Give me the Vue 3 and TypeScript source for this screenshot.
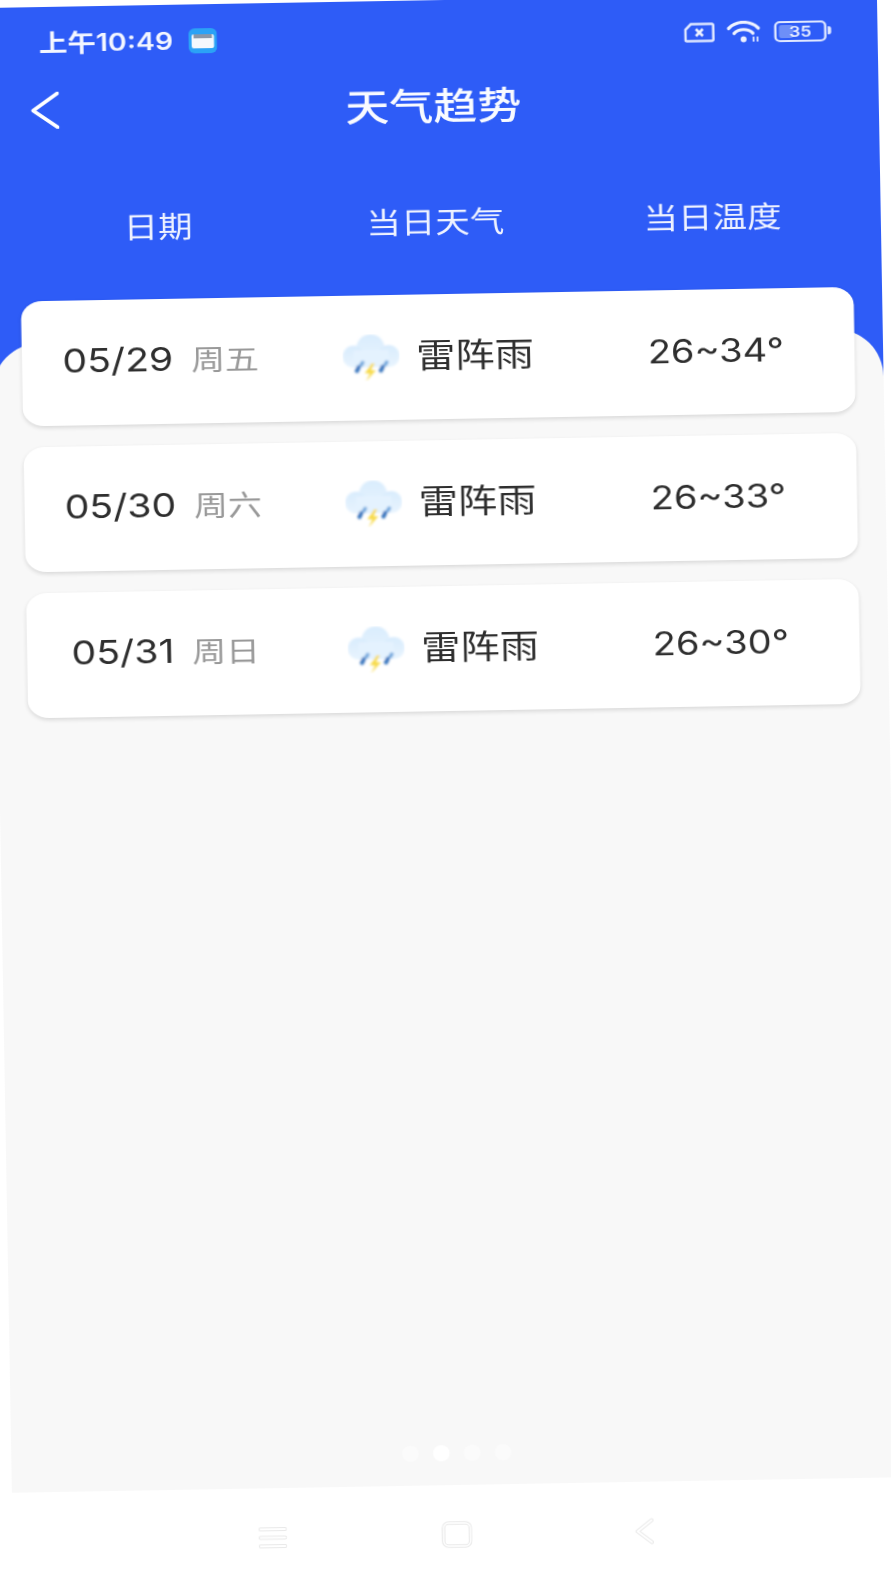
<script setup lang="ts">
interface Day {
  date: string
  week: string
  weather: string
  temp: string
}

const days: Day[] = [
  { date: '05/29', week: '周五', weather: '雷阵雨', temp: '26~34°' },
  { date: '05/30', week: '周六', weather: '雷阵雨', temp: '26~33°' },
  { date: '05/31', week: '周日', weather: '雷阵雨', temp: '26~30°' },
]
const columns: string[] = ['日期', '当日天气', '当日温度']
const dots: number[] = [0, 1, 2, 3]
</script>

<template>
  <div class="page">
    <div class="screen">
      <div class="blue">
        <header class="head">
          <div class="status">
            <div class="status-left">
              <span class="time">上午10:49</span>
              <svg class="wallet" viewBox="0 0 28 25" preserveAspectRatio="none">
                <rect x="0" y="0" width="28" height="25" rx="6" fill="#2ba2f6" />
                <rect x="3" y="6" width="22" height="14" rx="2" fill="#f4f8fd" />
                <rect x="5" y="6" width="18" height="4" fill="#8a97a8" />
              </svg>
            </div>
            <div class="status-right">
              <svg class="sim" viewBox="0 0 31 20" preserveAspectRatio="none">
                <path d="M7 1.500H28a1.500 1.500 0 0 1 1.500 1.500V17a1.500 1.500 0 0 1-1.500 1.500H3A1.500 1.500 0 0 1 1.500 17V7Z" fill="none" stroke="#dfe7ff" stroke-width="2.600" />
                <path d="M12 6.500l7 7M19 6.500l-7 7" stroke="#eef2ff" stroke-width="2.600" fill="none" />
              </svg>
              <svg class="wifi" viewBox="0 0 36 22" preserveAspectRatio="none">
                <g fill="none" stroke="#eef2ff" stroke-width="3.200" stroke-linecap="round">
                  <path d="M2 7.500C10 -0.500 24 -0.500 32 7.500" />
                  <path d="M7.500 12.500C12.500 7.500 21.500 7.500 26.500 12.500" />
                </g>
                <circle cx="17" cy="18.500" r="3" fill="#eef2ff" />
                <path d="M27 21v-5M31 16v5" stroke="#dfe7ff" stroke-width="1.800" />
              </svg>
              <div class="battery">
                <div class="battery-body">
                  <span class="battery-level"></span>
                  <span class="battery-text">35</span>
                </div>
                <span class="battery-nub"></span>
              </div>
            </div>
          </div>
          <div class="nav">
            <svg class="back" viewBox="0 0 28 37" preserveAspectRatio="none">
              <path d="M26.500 1.500L2.500 18.500L26.500 35.500" fill="none" stroke="#fff" stroke-width="3.600" stroke-linecap="round" stroke-linejoin="round" />
            </svg>
            <h1 class="title">天气趋势</h1>
          </div>
          <div class="cols">
            <span v-for="c in columns" :key="c" class="col-label">{{ c }}</span>
          </div>
        </header>

        <main class="sheet">
          <section class="list">
            <article v-for="d in days" :key="d.date" class="card">
              <div class="cell date-cell">
                <span class="num">{{ d.date }}</span>
                <span class="week">{{ d.week }}</span>
              </div>
              <div class="cell weather">
                <svg class="cloud" viewBox="0 0 57 47" preserveAspectRatio="none">
                  <defs>
                    <linearGradient id="cloudFill" x1="0" y1="0" x2="0" y2="1">
                      <stop offset="0" stop-color="#d9ecfd" />
                      <stop offset="1" stop-color="#e8f4fe" />
                    </linearGradient>
                    <filter id="soft" x="-10%" y="-10%" width="120%" height="120%">
                      <feGaussianBlur stdDeviation="0.900" />
                    </filter>
                  </defs>
                  <g filter="url(#soft)">
                    <circle cx="28" cy="14" r="14" fill="url(#cloudFill)" />
                    <circle cx="11" cy="22" r="11" fill="url(#cloudFill)" />
                    <circle cx="46" cy="22" r="11" fill="url(#cloudFill)" />
                    <rect x="11" y="16" width="35" height="17" fill="#e4f2fe" />
                    <path d="M14 36.500l2-4M38 36.500l2-4" stroke="#3974bd" stroke-width="4" stroke-linecap="round" fill="none" />
                    <path d="M18.500 30.500l1.500-2.500M42.500 30.500l1.500-2.500" stroke="#6ea6dc" stroke-width="3.500" stroke-linecap="round" fill="none" />
                    <path d="M29 29L22 39H27L23 47L33 36H28L32 29Z" fill="#f7da4a" />
                  </g>
                </svg>
                <span class="weather-text">{{ d.weather }}</span>
              </div>
              <div class="cell temp-cell">
                <span class="num temp">{{ d.temp }}</span>
              </div>
            </article>
          </section>
          <div class="dots">
            <span v-for="i in dots" :key="i" class="dot" :class="{ active: i === 1 }"></span>
          </div>
        </main>
      </div>

      <footer class="softkeys">
        <svg class="key key-menu" viewBox="0 0 29 23" preserveAspectRatio="none">
          <g fill="none" stroke-linecap="round">
            <path d="M2 3H27M2 11.500H27M2 20H27" stroke="#e9e9e9" stroke-width="4" />
            <path d="M2 3H27M2 11.500H27M2 20H27" stroke="#fff" stroke-width="1.800" />
          </g>
        </svg>
        <svg class="key key-home" viewBox="0 0 31 27" preserveAspectRatio="none">
          <rect x="2" y="2" width="27" height="23" rx="5" fill="none" stroke="#e9e9e9" stroke-width="3.600" />
          <rect x="2" y="2" width="27" height="23" rx="5" fill="none" stroke="#fff" stroke-width="1.400" />
        </svg>
        <svg class="key key-back" viewBox="0 0 20 27" preserveAspectRatio="none">
          <path d="M17 2.500L3 13.500L17 24.500" fill="none" stroke="#e9e9e9" stroke-width="4" stroke-linecap="round" stroke-linejoin="round" />
          <path d="M17 2.500L3 13.500L17 24.500" fill="none" stroke="#fff" stroke-width="1.800" stroke-linecap="round" stroke-linejoin="round" />
        </svg>
      </footer>
    </div>
  </div>
</template>

<style>
html,
body {
  margin: 0;
  background: #fff;
  overflow: hidden;
}
</style>

<style scoped>
.page {
  width: 891px;
  height: 1585px;
  overflow: hidden;
  background: #fff;
  font-family: Inter, "Noto Sans CJK SC", sans-serif;
}
.screen {
  width: 750px;
  transform-origin: 0 0;
  transform: translate(-14px, 8px) rotate(-1deg) scale(1.188, 1);
  filter: blur(0.35px);
}
.blue {
  background: #2e5cf7;
}
.head {
  height: 336px;
  color: #fff;
}
.status {
  height: 74px;
  padding: 0 39px 0 44px;
  display: flex;
  align-items: center;
  justify-content: space-between;
}
.status-left,
.status-right {
  display: flex;
  align-items: center;
}
.status-left {
  gap: 13px;
}
.status-right {
  gap: 10px;
}
.time {
  padding-bottom: 6px;
  font-size: 24px;
  font-weight: 600;
  color: #f3f6ff;
}
.wallet {
  width: 24px;
  height: 25px;
  margin-bottom: 2px;
}
.sim {
  width: 26px;
  height: 20px;
}
.wifi {
  width: 30px;
  height: 22px;
}
.battery {
  display: flex;
  align-items: center;
  gap: 1px;
}
.battery-body {
  position: relative;
  width: 40px;
  height: 17px;
  border: 2.500px solid #dfe7ff;
  border-radius: 5px;
  display: flex;
  align-items: center;
  justify-content: center;
}
.battery-level {
  position: absolute;
  left: 2px;
  top: 2px;
  bottom: 2px;
  width: 12px;
  border-radius: 2px;
  background: #6d8ff8;
}
.battery-text {
  position: relative;
  font-size: 15px;
  font-weight: 600;
  color: #e6ecff;
}
.battery-nub {
  width: 3px;
  height: 8px;
  border-radius: 0 2px 2px 0;
  background: #dfe7ff;
}
.nav {
  position: relative;
  height: 62px;
  display: flex;
  align-items: center;
  justify-content: center;
}
.back {
  position: absolute;
  left: 36px;
  top: 11px;
  width: 24px;
  height: 37px;
}
.title {
  margin: 0;
  padding-bottom: 3px;
  font-size: 37px;
  font-weight: 500;
  color: #f8faff;
}
.cols {
  margin: 63px 25px 0;
  height: 38px;
  display: grid;
  grid-template-columns: repeat(3, 1fr);
  align-items: center;
  justify-items: center;
}
.col-label {
  font-size: 29px;
  color: #eef2ff;
}
.sheet {
  height: 1148.500px;
  background: #f8f8f8;
  border-radius: 40px 40px 0 0 / 48px 48px 0 0;
  display: flex;
  flex-direction: column;
  box-sizing: border-box;
}
.list {
  margin: -42px 24px 0 25px;
  display: flex;
  flex-direction: column;
  gap: 21px;
}
.card {
  height: 125px;
  background: #fff;
  border-radius: 18px;
  box-shadow: 0 2px 4px rgba(0, 0, 0, 0.13);
  display: grid;
  grid-template-columns: repeat(3, 1fr);
  align-items: center;
}
.cell {
  display: flex;
  align-items: center;
  justify-content: center;
}
.date-cell {
  padding-bottom: 6px;
}
.temp-cell {
  padding-bottom: 2px;
}
.num {
  font-size: 33px;
  color: #2e2e2e;
  white-space: nowrap;
}
.temp {
  font-size: 32px;
}
.week {
  margin-left: 15px;
  font-size: 28.500px;
  color: #999;
  white-space: nowrap;
}
.weather {
  gap: 14px;
}
.cloud {
  width: 48px;
  height: 47px;
}
.weather-text {
  padding-bottom: 7px;
  font-size: 33px;
  color: #2e2e2e;
  white-space: nowrap;
}
.dots {
  margin-top: auto;
  padding-bottom: 23.500px;
  display: flex;
  justify-content: center;
  gap: 12px;
}
.dot {
  width: 14px;
  height: 16px;
  border-radius: 50%;
  background: #fbfbfb;
}
.dot.active {
  background: #fff;
}
.softkeys {
  height: 100px;
  background: #fff;
  display: flex;
  align-items: center;
  justify-content: center;
  gap: 95px;
}
.key {
  width: 60px;
  height: 27px;
}
.key-menu {
  padding: 2px 18px;
  width: 24px;
  height: 23px;
}
.key-home {
  padding: 0 17px;
  width: 26px;
}
.key-back {
  padding: 0 21.500px;
  width: 17px;
  margin-left: 3px;
}
</style>
